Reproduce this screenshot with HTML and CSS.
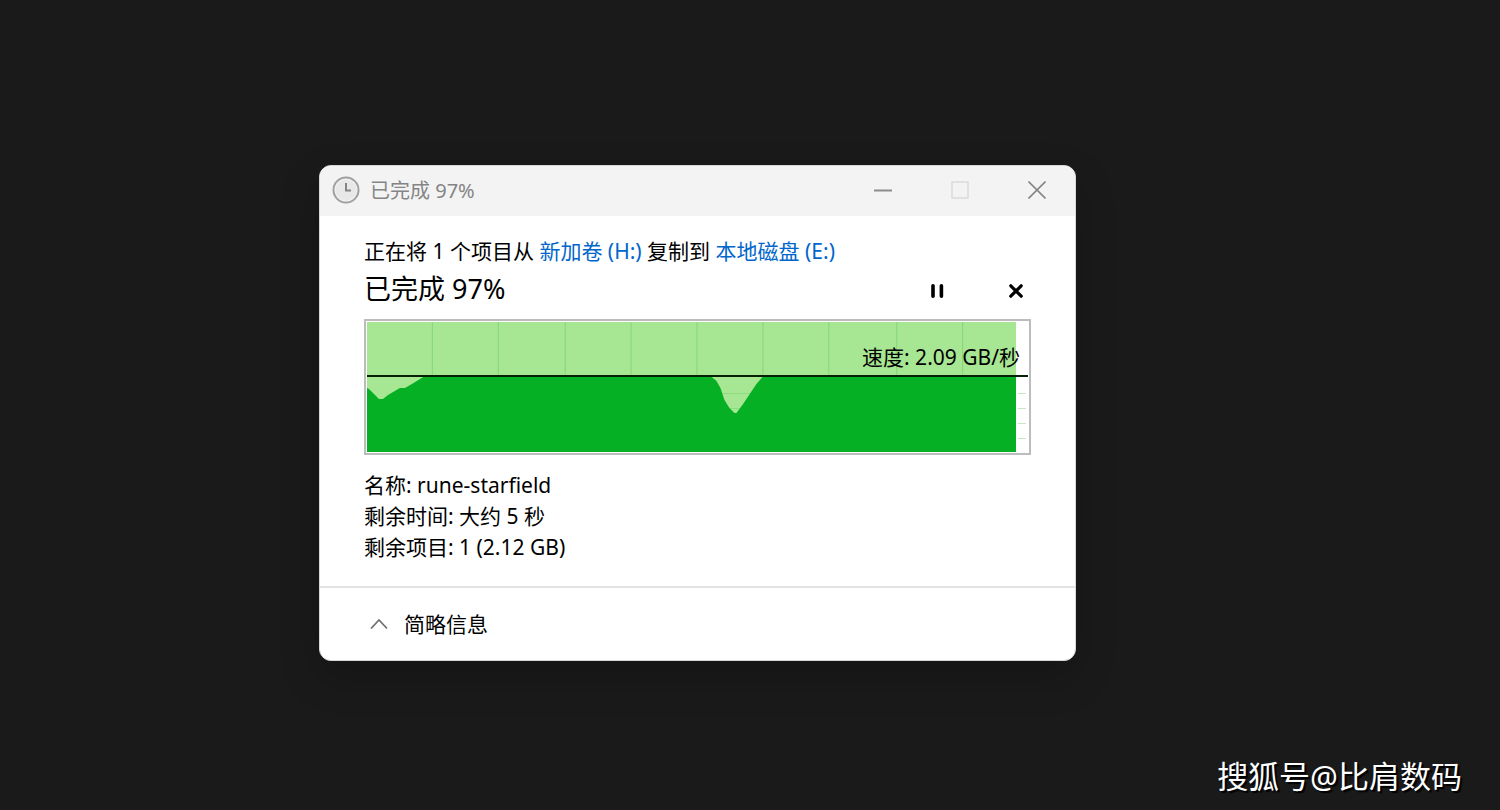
FILE: index.html
```html
<!DOCTYPE html>
<html lang="zh-CN">
<head>
    <meta charset="UTF-8">
    <meta name="viewport" content="width=device-width, initial-scale=1.0">
    <title>已完成 97%</title>
    <link rel="stylesheet" href="styles.css">
</head>
<body>
    <main class="copy-window">
        <header class="title-bar">
            <svg class="clock-icon" viewBox="0 0 28 28" aria-hidden="true">
                <circle cx="14" cy="14" r="12.5" fill="#f3f3f3" stroke="#a0a0a0" stroke-width="2"/>
                <circle cx="14" cy="14" r="10.5" fill="#e8e8e8"/>
                <path d="M14 7v7.5h5" fill="none" stroke="#858585" stroke-width="2"/>
            </svg>
            <span class="title-text">已完成 97%</span>
            <div class="window-buttons">
                <button type="button" class="window-btn" aria-label="最小化">
                    <svg viewBox="0 0 18 18"><path d="M0 9.5h18" stroke="#8c8c8c" stroke-width="1.8"/></svg>
                </button>
                <button type="button" class="window-btn" aria-label="最大化" disabled>
                    <svg viewBox="0 0 18 18"><rect x="1" y="1" width="16" height="16" fill="none" stroke="#dcdcdc" stroke-width="1.6"/></svg>
                </button>
                <button type="button" class="window-btn" aria-label="关闭">
                    <svg viewBox="0 0 18 18"><path d="M.5.5l17 17M17.5.5l-17 17" stroke="#868686" stroke-width="1.6"/></svg>
                </button>
            </div>
        </header>

        <section class="content">
            <p class="summary">正在将 1 个项目从 <a href="#">新加卷 (H:)</a> 复制到 <a href="#">本地磁盘 (E:)</a></p>
            <div class="progress-row">
                <h1>已完成 97%</h1>
                <div class="actions">
                    <button type="button" class="action-btn" aria-label="暂停">
                        <svg viewBox="0 0 16 16"><path d="M4 2.8v10.4M12.4 2.8v10.4" stroke="#000" stroke-width="3.6" stroke-linecap="round"/></svg>
                    </button>
                    <button type="button" class="action-btn" aria-label="取消">
                        <svg viewBox="0 0 16 16"><path d="M2.8 2.8l10.4 10.4M13.2 2.8L2.8 13.2" stroke="#000" stroke-width="3.2" stroke-linecap="round"/></svg>
                    </button>
                </div>
            </div>

            <div class="chart">
                <svg viewBox="0 0 662 130" preserveAspectRatio="none" aria-hidden="true">
                    <rect width="650" height="130" fill="#a7e692"/>
                    <!-- grid -->
                    <path d="M65.5 0v130M131.5 0v130M198.5 0v130M264.5 0v130M330.5 0v130M396.5 0v130M462.5 0v130M530.5 0v130M596.5 0v130" fill="none" stroke="#86d878"/>
                    <path d="M340 71.5h60M340 86.5h60" fill="none" stroke="#8edb7f"/>
                    <path d="M652 71.5h8M652 86.5h8M652 101.5h8M652 116.5h8" fill="none" stroke="#c4e8c4"/>
                    <!-- transfer speed -->
                    <path d="M0 66L2 67 12 77H16L21 73 33 66H38L45 62 58 54H344L350 59 354 66 358 78 363 86 368 91H370L376 83 382 74 390 62 397 54H650V130H0z" fill="#06b025"/>
                    <path d="M0 54h662" stroke="#062006" stroke-width="2"/>
                </svg>
                <span class="speed">速度: 2.09 GB/秒</span>
            </div>

            <ul class="details">
                <li>名称: rune-starfield</li>
                <li>剩余时间: 大约 5 秒</li>
                <li>剩余项目: 1 (2.12 GB)</li>
            </ul>
        </section>

        <footer class="window-footer">
            <button type="button" class="toggle-btn">
                <svg viewBox="0 0 18 12" aria-hidden="true"><path d="M1 10.5l8-8.5 8 8.5" fill="none" stroke="#707070" stroke-width="1.8"/></svg>
                简略信息
            </button>
        </footer>
    </main>

    <div class="watermark">搜狐号@比肩数码</div>
</body>
</html>
```

FILE: styles.css
```css
* {
    margin: 0;
    padding: 0;
    box-sizing: border-box;
}

body {
    position: relative;
    min-height: 100vh;
    background: #1a1a1a;
    color: #000;
    font-family: "Noto Sans", "Noto Sans CJK SC", sans-serif;
    font-size: 21px;
    line-height: 31px;
}

button {
    background: none;
    border: none;
    color: inherit;
    font: inherit;
}

a {
    color: #0066cc;
    text-decoration: none;
}

.copy-window {
    position: absolute;
    top: 165px;
    left: 319px;
    right: 424px;
    background: #fff;
    border: 1px solid #d8d8d8;
    border-radius: 12px;
    box-shadow: 0 16px 40px rgba(0, 0, 0, 0.2);
    overflow: hidden;
}

/* Title bar */
.title-bar {
    display: flex;
    align-items: center;
    height: 50px;
    padding: 0 0 2px 12px;
    background: #f3f3f3;
    color: #858585;
    font-size: 20px;
}

.clock-icon {
    width: 28px;
    height: 28px;
    margin-right: 10px;
}

.window-buttons {
    display: flex;
    height: 100%;
    margin-left: auto;
}

.window-btn {
    display: flex;
    align-items: center;
    justify-content: center;
    width: 77px;
}

.window-btn svg {
    width: 18px;
    height: 18px;
}

/* Content */
.content {
    padding: 20px 44px 23px;
}

.progress-row {
    display: flex;
    align-items: center;
    justify-content: space-between;
    height: 42px;
}

.progress-row h1 {
    font-size: 27px;
    font-weight: 400;
}

.actions {
    display: flex;
    gap: 49px;
    padding-top: 5px;
}

.action-btn {
    display: flex;
    align-items: center;
    justify-content: center;
    width: 30px;
    height: 30px;
}

.action-btn svg {
    width: 16px;
    height: 16px;
}

.chart {
    position: relative;
    margin: 10px 0 15px;
    padding: 1px;
    border: 2px solid #bcbcbc;
}

.chart svg {
    display: block;
    width: 100%;
    height: 130px;
}

.speed {
    position: absolute;
    top: 21px;
    right: 9px;
}

.details {
    list-style: none;
}

/* Footer */
.window-footer {
    display: flex;
    align-items: center;
    height: 74px;
    padding-left: 50px;
    border-top: 2px solid #e3e3e3;
}

.toggle-btn {
    display: flex;
    align-items: center;
    gap: 16px;
}

.toggle-btn svg {
    width: 18px;
    height: 12px;
}

.watermark {
    position: absolute;
    right: 38px;
    bottom: 12px;
    color: #fff;
    font-size: 31px;
    line-height: 44px;
    text-shadow: 2px 2px 1px #000;
}
```
